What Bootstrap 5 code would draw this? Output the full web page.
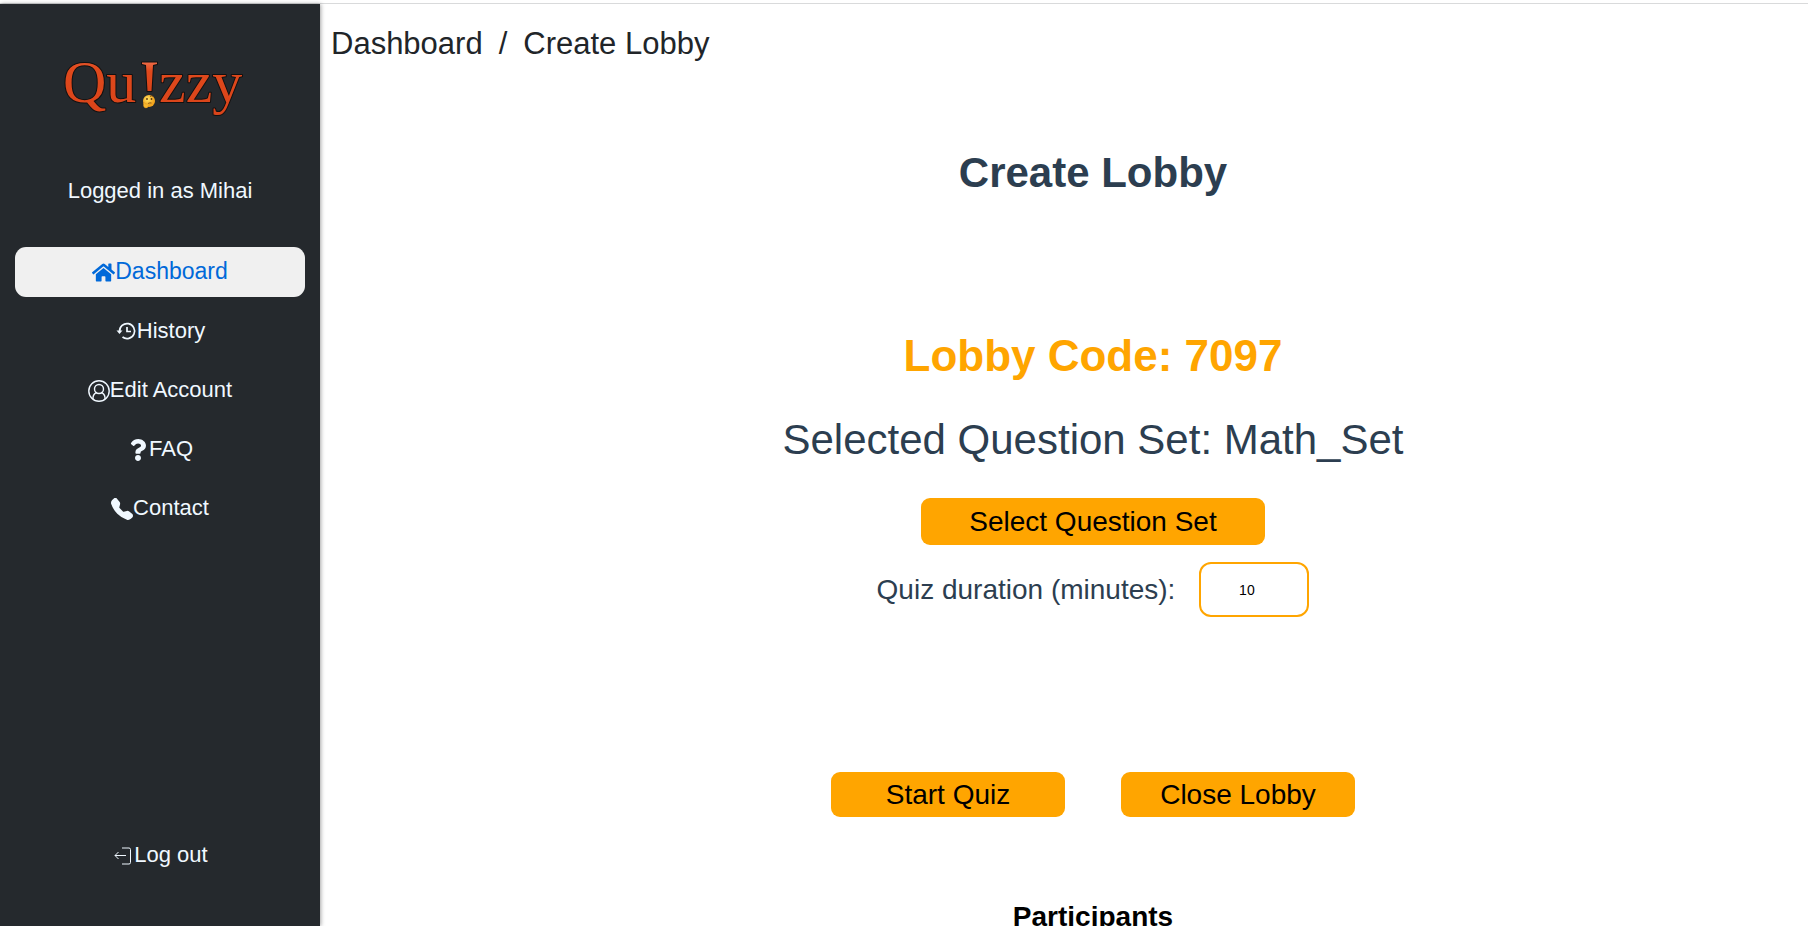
<!DOCTYPE html>
<html lang="en">
<head>
<meta charset="utf-8">
<meta name="viewport" content="width=device-width, initial-scale=1">
<title>Quizzy - Create Lobby</title>
<link href="https://cdn.jsdelivr.net/npm/bootstrap@5.3.0/dist/css/bootstrap.min.css" rel="stylesheet">
<style>
body { font-family: "Liberation Sans", Arial, sans-serif; color: #212529; }
.app-shell { height: 100vh; padding-top: 3px; }
.app-body { border-top: 1px solid #d9dadb; min-height: 0; }
.side-panel { width: 320px; background: #25292d; box-shadow: 1px 0 4px rgba(0,0,0,.35); font-size: 22px; line-height: 28px; color: #f0f8ff; padding: 38px 15px 46px; }
.side-panel .logo { width: 200px; height: 100px; margin-left: 40px; }
.logo text { font-family: "Liberation Serif", "Times New Roman", serif; font-size: 60px; }
.signed-in { margin: 35px 0 42px; }
.side-panel .nav { gap: 9px; }
.side-panel .nav-link { display: flex; align-items: center; justify-content: center; height: 50px; padding: 0; color: #f0f8ff; border-radius: 11px; }
.side-panel .nav-link.active { background: #f0f0f0; color: #0069d9; font-size: 23px; padding-bottom: 2px; }
.side-panel .nav-link svg { width: 22px; height: 22px; margin-top: 2px; flex: none; }
.side-panel .nav-link.active svg { width: 23px; height: 23px; }
.crumbs { --bs-breadcrumb-divider-color: #212529; --bs-breadcrumb-item-active-color: #212529; --bs-breadcrumb-item-padding-x: 16px; font-size: 31px; line-height: 40px; padding: 20px 11px 0; margin: 0; }
.crumbs a { color: #212529; text-decoration: none; }
.lobby { margin-left: 58px; color: #2c3e50; }
.lobby h1 { font-size: 42px; line-height: 52px; font-weight: 700; margin: 83px 0 0; }
.lobby-code { font-size: 44px; line-height: 54px; font-weight: 700; color: orange; margin: 130px 0 0; }
.question-set { font-size: 42px; line-height: 52px; margin: 31px 0 0; }
.btn-quiz { --bs-btn-bg: orange; --bs-btn-color: #000; --bs-btn-hover-bg: #e69500; --bs-btn-hover-color: #000; --bs-btn-border-width: 0; --bs-btn-border-radius: 9px; font-size: 28px; line-height: 33px; padding: 6px 0; }
.btn-set { width: 344px; padding: 7px 0; margin-top: 32px; }
.btn-action { width: 234px; }
.duration { gap: 24px; font-size: 28px; line-height: 34px; margin-top: 17px; }
.duration input { width: 110px; height: 55px; font-size: 14px; color: #000; border: 2px solid orange; border-radius: 12px; }
.actions { gap: 56px; margin-top: 155px; }
.lobby h2 { font-size: 28px; line-height: 34px; font-weight: 700; color: #000; margin: 83px 0 0; }
</style>
</head>
<body>
<div class="app-shell d-flex flex-column overflow-hidden">
  <div class="app-body d-flex flex-grow-1">
    <aside class="side-panel d-flex flex-column flex-shrink-0">
      <svg class="logo" viewBox="0 -10 200 100" role="img" aria-label="Quizzy">
        <defs>
          <linearGradient id="ember" x1="0" y1="0" x2="0" y2="1"><stop offset="0" stop-color="#ee6a45"/><stop offset=".3" stop-color="#e0491c"/><stop offset="1" stop-color="#d9441a"/></linearGradient>
          <radialGradient id="face" cx=".4" cy=".35"><stop offset="0" stop-color="#ffe566"/><stop offset="1" stop-color="#f2a51e"/></radialGradient>
        </defs>
        <g fill="url(#ember)" stroke="#121010" stroke-width="2" paint-order="stroke" stroke-linejoin="round">
          <text x="8" y="50">Qu</text>
          <path d="M87 10.500h15v1.500l-4 1-1.500 26h-4L91 13l-4-1z"/>
          <text x="104" y="50">zzy</text>
        </g>
        <circle cx="94" cy="49" r="6" fill="url(#face)"/>
        <circle cx="92" cy="47" r=".9" fill="#5a3410"/><circle cx="96.500" cy="47" r=".9" fill="#5a3410"/>
        <path d="M95 44.500q2-1.500 3.500 0M93 51.500q2-1 3.500-.5" fill="none" stroke="#6b3d10" stroke-width=".8"/>
        <path d="M88.500 51q1.500-1 2 1l3.500 0q1 1-.5 1.500l-1 2q-3 1.500-4-1.500z" fill="#f7b62c" stroke="#d98f1c" stroke-width=".4"/>
      </svg>
      <div class="signed-in text-center">Logged in as Mihai</div>
      <nav class="nav flex-column">
        <a class="nav-link active" href="#" aria-current="page"><svg viewBox="0 0 576 512" fill="currentColor" aria-hidden="true"><path d="M280.370 148.260L96 300.110V464a16 16 0 0 0 16 16l112.060-.29a16 16 0 0 0 15.920-16V368a16 16 0 0 1 16-16h64a16 16 0 0 1 16 16v95.640a16 16 0 0 0 16 16.050L464 480a16 16 0 0 0 16-16V300L295.670 148.260a12.190 12.190 0 0 0-15.300 0zM571.600 251.470L488 182.560V44.050a12 12 0 0 0-12-12h-56a12 12 0 0 0-12 12v72.610L318.470 43a48 48 0 0 0-61 0L4.340 251.470a12 12 0 0 0-1.600 16.900l25.500 31A12 12 0 0 0 45.150 301l235.220-193.740a12.190 12.190 0 0 1 15.300 0L530.900 301a12 12 0 0 0 16.900-1.600l25.500-31a12 12 0 0 0-1.700-16.930z"/></svg>Dashboard</a>
        <a class="nav-link" href="#"><svg viewBox="0 0 22 22" fill="none" stroke="currentColor" stroke-width="1.700" aria-hidden="true"><path d="M4.600 10.500a7.500 7.500 0 1 1 2.900 5.500M12 6v4.500h4"/><path d="M1.500 9.500h6L4.500 13z" fill="currentColor" stroke="none"/></svg>History</a>
        <a class="nav-link" href="#"><svg viewBox="0 0 22 22" fill="none" stroke="currentColor" stroke-width="1.400" aria-hidden="true"><circle cx="11" cy="11" r="10.200"/><circle cx="11" cy="9" r="4.500"/><path d="M5 19v-1.500q.5-4 4-5M17 19v-1.500q-.5-4-4-5"/></svg>Edit Account</a>
        <a class="nav-link" href="#"><svg viewBox="0 0 384 512" fill="currentColor" aria-hidden="true"><path d="M202.021 0C122.202 0 70.503 32.703 29.914 91.026c-7.363 10.580-5.093 25.086 5.178 32.874l43.138 32.709c10.373 7.865 25.132 6.026 33.253-4.148 25.049-31.381 43.630-49.449 82.757-49.449 30.764 0 68.816 19.799 68.816 49.631 0 22.552-18.617 34.134-48.993 51.164-35.423 19.860-82.299 44.576-82.299 106.405V320c0 13.255 10.745 24 24 24h72.471c13.255 0 24-10.745 24-24v-5.773c0-42.860 125.268-44.645 125.268-160.627C377.504 66.256 286.902 0 202.021 0zM192 373.459c-38.196 0-69.271 31.075-69.271 69.271 0 38.195 31.075 69.270 69.271 69.270s69.271-31.075 69.271-69.271-31.075-69.270-69.271-69.270z"/></svg>FAQ</a>
        <a class="nav-link" href="#"><svg viewBox="0 0 16 16" fill="currentColor" aria-hidden="true"><path d="M1.885.511a1.745 1.745 0 0 1 2.610.163L6.290 2.980c.329.423.445.974.315 1.494l-.547 2.190a.678.678 0 0 0 .178.643l2.457 2.457a.678.678 0 0 0 .644.178l2.189-.547a1.745 1.745 0 0 1 1.494.315l2.306 1.794c.829.645.905 1.870.163 2.611l-1.034 1.034c-.74.74-1.846 1.065-2.877.702a18.634 18.634 0 0 1-7.010-4.420 18.634 18.634 0 0 1-4.420-7.009c-.362-1.030-.037-2.137.703-2.877L1.885.511z"/></svg>Contact</a>
      </nav>
      <nav class="nav flex-column mt-auto">
        <a class="nav-link" href="#"><svg viewBox="0 0 22 22" fill="none" stroke="currentColor" aria-hidden="true"><path d="M10 3h7q1.500 0 1.500 1.500v13q0 1.500-1.500 1.500h-7M14 10.500H3M6.500 7L3 10.500l3.500 3.500"/></svg>Log out</a>
      </nav>
    </aside>
    <main class="flex-grow-1">
      <nav aria-label="breadcrumb">
        <ol class="breadcrumb crumbs">
          <li class="breadcrumb-item"><a href="#">Dashboard</a></li>
          <li class="breadcrumb-item active" aria-current="page">Create Lobby</li>
        </ol>
      </nav>
      <section class="lobby d-flex flex-column align-items-center text-center">
        <h1>Create Lobby</h1>
        <p class="lobby-code">Lobby Code: 7097</p>
        <p class="question-set">Selected Question Set: Math_Set</p>
        <button type="button" class="btn btn-quiz btn-set">Select Question Set</button>
        <div class="duration d-flex align-items-center">
          <label for="duration">Quiz duration (minutes):</label>
          <input id="duration" class="text-center" type="number" min="1" value="10">
        </div>
        <div class="actions d-flex">
          <button type="button" class="btn btn-quiz btn-action">Start Quiz</button>
          <button type="button" class="btn btn-quiz btn-action">Close Lobby</button>
        </div>
        <h2>Participants</h2>
      </section>
    </main>
  </div>
</div>
<script src="https://cdn.jsdelivr.net/npm/bootstrap@5.3.0/dist/js/bootstrap.bundle.min.js"></script>
</body>
</html>
